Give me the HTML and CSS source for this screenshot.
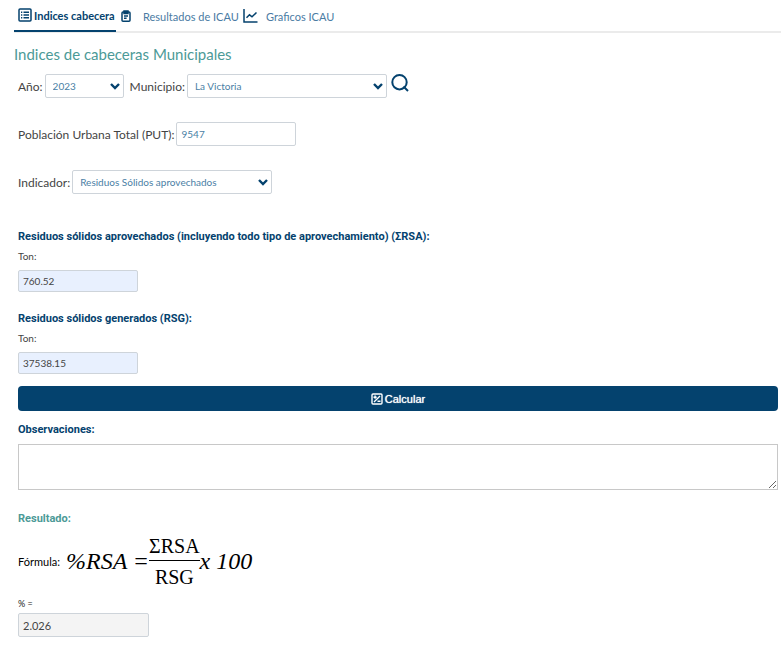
FILE: index.html
```html
<!DOCTYPE html>
<html lang="es">
<head>
	<meta charset="UTF-8">
	<title>Indices de cabeceras Municipales</title>
	<link rel="stylesheet" href="styles.css">
</head>
<body>
	<nav class="tabs">
		<a href="#indices" class="tab active">
			<svg class="icon-list" viewBox="0 0 14 14" fill="none" stroke="currentColor" stroke-width="1.5">
				<rect x="1" y="1" width="12" height="12" rx="1"/>
				<path d="M3 4.2h1.3M5.5 4.2H11M3 7h1.3M5.5 7H11M3 9.8h1.3M5.5 9.8H11"/>
			</svg>
			<span>Indices cabecera</span>
		</a>
		<a href="#resultados" class="tab tab-results">
			<svg class="icon-clip" viewBox="0 0 10 12" fill="none" stroke="currentColor" stroke-width="1.5">
				<rect x="1" y="2" width="8" height="9.2" rx="1"/>
				<path d="M3 1h4v2.4H3z" fill="currentColor"/>
				<path d="M3 6h4M3 8.3h2.6"/>
			</svg>
			<span>Resultados de ICAU</span>
		</a>
		<a href="#graficos" class="tab tab-charts">
			<svg class="icon-chart" viewBox="0 0 15 14" fill="none" stroke="currentColor" stroke-width="1.5">
				<path d="M1 0v13h13.5"/>
				<path d="M3.5 8.8l3-3 2.5 2 4.5-4.3"/>
			</svg>
			<span>Graficos ICAU</span>
		</a>
	</nav>

	<h1>Indices de cabeceras Municipales</h1>

	<form id="main">
		<div class="row">
			<label for="anio">Año:</label>
			<select name="anio" id="anio" class="year">
				<option>2023</option>
			</select>
			<label for="municipio" class="next">Municipio:</label>
			<select name="municipio" id="municipio">
				<option>La Victoria</option>
			</select>
			<button type="button" class="search" aria-label="Buscar">
				<svg viewBox="0 0 18 18" fill="none" stroke="currentColor" stroke-width="2">
					<circle cx="8.5" cy="8.2" r="7.2"/>
					<path d="M12.5 12.5l4.5 4.5"/>
				</svg>
			</button>
		</div>
		<div class="row">
			<label for="put">Población Urbana Total (PUT):</label>
			<input type="text" id="put" value="9547">
		</div>
		<div class="row">
			<label for="indicador">Indicador:</label>
			<select name="indicador" id="indicador">
				<option>Residuos Sólidos aprovechados</option>
			</select>
		</div>

		<div class="field first">
			<h2>Residuos sólidos aprovechados (incluyendo todo tipo de aprovechamiento) (ΣRSA):</h2>
			<label for="rsa">Ton:</label>
			<input type="text" id="rsa" value="760.52">
		</div>
		<div class="field">
			<h2>Residuos sólidos generados (RSG):</h2>
			<label for="rsg">Ton:</label>
			<input type="text" id="rsg" value="37538.15">
		</div>

		<button type="button" class="calc">
			<svg viewBox="0 0 12 12" fill="none" stroke="currentColor" stroke-width="1.4">
				<rect x="1" y="1" width="10" height="10" rx="1"/>
				<path d="M3 9l6-6M2.5 4.2h3.2M4.1 2.6v3.2M6.5 8.2h3"/>
			</svg>
			<span>Calcular</span>
		</button>

		<h2><label for="obs">Observaciones:</label></h2>
		<textarea id="obs"></textarea>

		<h2 class="result">Resultado:</h2>
		<div class="formula">
			<span class="name">Fórmula:</span>
			<i>%RSA =</i>
			<span class="fraction">
				<span class="top">ΣRSA</span>
				<span class="bottom">RSG</span>
			</span>
			<i>x 100</i>
		</div>
		<label for="total" class="percent">% =</label>
		<input type="text" id="total" class="total" value="2.026" readonly>
	</form>
</body>
</html>
```

FILE: styles.css
```css
*{
	box-sizing: border-box;
}
body{
	margin: 0;
	font-family: Lato, "Open Sans", sans-serif;
	font-size: 12px;
	color: #444;
	background-color: #fff;
}
.tabs{
	display: flex;
	height: 33px;
	margin-left: 14px;
	border-bottom: 2px solid #ebebeb;
}
.tab{
	display: flex;
	align-items: center;
	height: 32px;
	font-size: 11px;
	color: #4a7ba3;
	text-decoration: none;
}
.tab svg{
	color: #04426e;
}
.active{
	width: 102px;
	padding-left: 4px;
	gap: 2px;
	border-bottom: 2px solid #04426e;
	font-weight: bold;
	color: #04426e;
	white-space: nowrap;
}
.tab-results{
	width: 127px;
	padding-left: 5px;
	gap: 12px;
}
.tab-charts{
	gap: 8px;
}
.icon-list{
	width: 14px;
	height: 14px;
}
.icon-clip{
	width: 10px;
	height: 12px;
}
.icon-chart{
	width: 15px;
	height: 14px;
}
h1{
	margin: 11px 0 10px 14px;
	font-size: 15px;
	font-weight: normal;
	line-height: 20px;
	color: #4c9a97;
}
#main{
	padding: 0 3px 20px 18px;
}
.row{
	display: flex;
	align-items: center;
	gap: 2px;
	height: 24px;
	margin-bottom: 24px;
}
.next{
	margin-left: 4px;
}
select,
input{
	height: 24px;
	border: 1px solid #ced4da;
	border-radius: 2px;
	font-family: inherit;
	font-size: 10px;
	color: #4a80a5;
}
select{
	width: 200px;
	padding: 0 20px 0 7px;
	appearance: none;
	background: #fff url("data:image/svg+xml,%3Csvg xmlns='http://www.w3.org/2000/svg' viewBox='0 0 10 7'%3E%3Cpath d='M1 1l4 4 4-4' fill='none' stroke='%2304426e' stroke-width='2.4'/%3E%3C/svg%3E") no-repeat right 3px center / 10px 7px;
}
.year{
	width: 79px;
}
input{
	width: 120px;
	padding: 0 4px;
}
.search{
	align-self: flex-start;
	width: 22px;
	height: 18px;
	padding: 0 2px;
	border: 0;
	background: none;
	color: #04426e;
}
.search svg{
	display: block;
	width: 18px;
	height: 18px;
}
h2{
	margin: 0;
	font-family: Roboto, sans-serif;
	font-size: 11px;
	font-weight: bold;
	line-height: 16px;
	color: #04426e;
}
.field{
	margin-bottom: 12px;
}
.first{
	margin: 35px 0 18px;
}
.field label{
	display: block;
	margin: 3px 0 6px;
	font-size: 10px;
	line-height: 16px;
}
.field input{
	display: block;
	height: 22px;
	background-color: #e8f0fe;
	color: #444;
}
.first + .field{
	margin-top: 19px;
}
.calc{
	display: flex;
	align-items: center;
	justify-content: center;
	gap: 2px;
	width: 100%;
	height: 25px;
	margin-bottom: 11px;
	border: 0;
	border-radius: 4px;
	background-color: #04426e;
	font-family: "Liberation Sans", Arial, sans-serif;
	font-size: 11px;
	text-shadow: 0 0 1px #fff;
	color: #fff;
}
.calc svg{
	width: 12px;
	height: 12px;
}
textarea{
	display: block;
	width: 100%;
	height: 46px;
	margin: 6px 0 21px;
	border: 1px solid #c8c8c8;
}
.result{
	color: #4c9a97;
}
.formula{
	display: flex;
	align-items: center;
	height: 54px;
	margin-top: 7px;
	font-family: "Liberation Serif", "Times New Roman", serif;
	font-size: 24px;
	color: #000;
}
.name{
	margin-right: 6px;
	font-family: Lato, sans-serif;
	font-size: 11px;
}
.fraction{
	display: flex;
	flex-direction: column;
	align-items: center;
	font-size: 20px;
	line-height: 26px;
}
.top{
	padding-bottom: 1px;
	border-bottom: 1px solid #000;
}
.bottom{
	padding-top: 3px;
}
.percent{
	display: block;
	margin: 10px 0 3px;
	font-size: 9px;
	line-height: 12px;
	color: #222;
}
.total{
	display: block;
	width: 131px;
	background-color: #f4f4f4;
	font-size: 11px;
	color: #444;
}
```
